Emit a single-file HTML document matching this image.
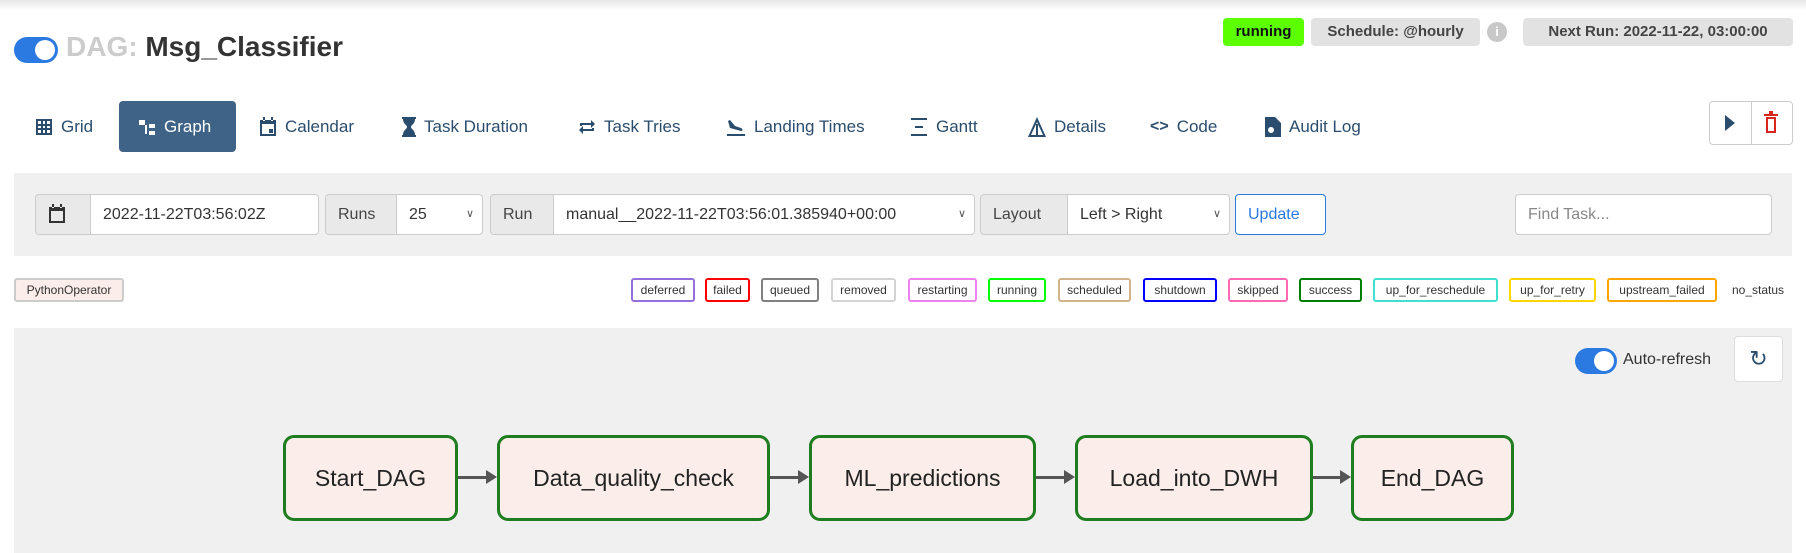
<!DOCTYPE html>
<html><head><meta charset="utf-8"><style>
*{box-sizing:border-box;margin:0;padding:0}
body{width:1806px;height:553px;overflow:hidden;background:#fff;font-family:"Liberation Sans",sans-serif;position:relative;color:#333}
.a{position:absolute}
.topshadow{left:0;top:0;width:1806px;height:10px;background:linear-gradient(#e6e6e6,#fff)}
.badge{position:absolute;top:18px;height:28px;border-radius:4px;font-weight:bold;font-size:15px;line-height:28px;text-align:center;color:#444;background:#e2e2e2}
.nav{position:absolute;top:101px;height:51px;line-height:51px;font-size:17px;color:#2a4d6e;display:flex;align-items:center;gap:8px}
.nav svg{fill:#2a4d6e}
.box{position:absolute;top:194px;height:41px;border:1px solid #ccc;font-size:16px;line-height:39px;padding-left:12px;background:#fff;color:#333}
.add{background:#e9e9e9;color:#444}
.chev{position:absolute;right:8px;top:0;font-size:11px;color:#555}
.st{position:absolute;top:278px;height:24px;border:2px solid;border-radius:3px;font-size:12px;line-height:20px;text-align:center;color:#333;background:#fff}
.node{position:absolute;top:435px;height:86px;border:3px solid #1e7d1e;border-radius:11px;background:#fbedea;font-size:23px;line-height:80px;text-align:center;color:#222}
.arr{position:absolute;top:476px;height:3px;background:#555}
.arrh{position:absolute;top:470px;width:0;height:0;border-top:7px solid transparent;border-bottom:7px solid transparent;border-left:11px solid #555}
.tog{position:absolute;width:44px;height:26px;border-radius:13px;background:#2a7ae2}
.tog::after{content:"";position:absolute;right:3px;top:3px;width:20px;height:20px;border-radius:50%;background:#fff}
</style></head><body>
<div class="a topshadow"></div>
<div class="tog" style="left:14px;top:37px"></div>
<div class="a" style="left:66px;top:31px;font-size:28px;font-weight:bold;color:#333"><span style="color:#ccc">DAG:</span> Msg_Classifier</div>

<div class="badge" style="left:1223px;width:81px;background:#5cff00;color:#111">running</div>
<div class="badge" style="left:1311px;width:169px">Schedule: @hourly</div>
<div class="a" style="left:1487px;top:22px;width:20px;height:20px;border-radius:50%;background:#c8c8c8;color:#fff;font-size:13px;font-weight:bold;text-align:center;line-height:20px">i</div>
<div class="badge" style="left:1523px;width:270px">Next Run: 2022-11-22, 03:00:00</div>

<div class="a" style="left:119px;top:101px;width:117px;height:51px;background:#3e6387;border-radius:4px"></div>
<div class="nav" style="left:35px"><svg width="18" height="18" viewBox="0 0 18 18"><path d="M1 1h16v16H1z M3 3v3h3V3z M8 3v3h2V3z M12 3v3h3V3z M3 8v2h3V8z M8 8v2h2V8z M12 8v2h3V8z M3 12v3h3v-3z M8 12v3h2v-3z M12 12v3h3v-3z" fill-rule="evenodd"/></svg>Grid</div>
<div class="nav" style="left:138px;color:#fff"><svg width="18" height="18" viewBox="0 0 18 18" style="fill:#fff"><rect x="1" y="2" width="6" height="5"/><rect x="11" y="6" width="6" height="4"/><rect x="11" y="13" width="6" height="4"/><rect x="7" y="7" width="2" height="9"/></svg>Graph</div>
<div class="nav" style="left:259px"><svg width="18" height="20" viewBox="0 0 18 20"><path d="M1 3h16v16H1z M3 7v10h12V7z M4 0h2v4H4z M12 0h2v4h-2z M10 12h4v4h-4z" fill-rule="evenodd"/></svg>Calendar</div>
<div class="nav" style="left:402px"><svg width="14" height="20" viewBox="0 0 14 20"><path d="M0 0h14v2h-1c0 5-4 6-4 8s4 3 4 8h1v2H0v-2h1c0-5 4-6 4-8S1 7 1 2H0z"/></svg>Task Duration</div>
<div class="nav" style="left:578px"><svg width="18" height="18" viewBox="0 0 18 18"><path d="M2 8V5h11V2l4 4-4 4V7H4v1z M16 10v3H5v3l-4-4 4-4v3h9v-1z"/></svg>Task Tries</div>
<div class="nav" style="left:726px"><svg width="20" height="18" viewBox="0 0 20 18"><path d="M1 16h18v2H1z M2 3l2-1 5 6 6 2c2 1 2 3 0 3L4 10z"/></svg>Landing Times</div>
<div class="nav" style="left:910px"><svg width="18" height="18" viewBox="0 0 18 18"><path d="M1 0h16v2H1z M5 8h8v2H5z M1 16h16v2H1z"/></svg>Gantt</div>
<div class="nav" style="left:1028px"><svg width="18" height="20" viewBox="0 0 18 20"><path d="M9 0L0 20h18z M9 5l-6 13h5V7h2v11h5z" fill-rule="evenodd"/></svg>Details</div>
<div class="nav" style="left:1150px"><span style="font-weight:bold;font-size:16px">&lt;&gt;</span>Code</div>
<div class="nav" style="left:1265px"><svg width="16" height="20" viewBox="0 0 16 20"><path d="M0 0h10l6 6v14H0z M6 10a3 3 0 1 0 0.1 0z M8 14l3 3" fill-rule="evenodd"/></svg>Audit Log</div>

<div class="a" style="left:1709px;top:101px;width:84px;height:44px;border:1px solid #ccc;border-radius:4px"></div>
<div class="a" style="left:1751px;top:101px;width:1px;height:44px;background:#ccc"></div>
<div class="a" style="left:1725px;top:115px;width:0;height:0;border-top:8px solid transparent;border-bottom:8px solid transparent;border-left:10px solid #2a4d6e"></div>
<svg class="a" style="left:1764px;top:111px" width="14" height="22" viewBox="0 0 14 22"><path d="M0 3h14v2H0z M5 0h4v3H5z M2 6h10v16H2z M4 8v12h6V8z" fill="#d9261c" fill-rule="evenodd"/></svg>

<div class="a" style="left:14px;top:173px;width:1778px;height:83px;background:#f0f0f0"></div>
<div class="box add" style="left:35px;width:56px;border-radius:4px 0 0 4px"><svg style="margin-top:9px" width="18" height="20" viewBox="0 0 18 20"><path d="M1 3h16v16H1z M3 7v10h12V7z M4 0h2v4H4z M12 0h2v4h-2z" fill="#333" fill-rule="evenodd"/></svg></div>
<div class="box" style="left:90px;width:229px;border-radius:0 4px 4px 0">2022-11-22T03:56:02Z</div>
<div class="box add" style="left:325px;width:72px;border-radius:4px 0 0 4px">Runs</div>
<div class="box" style="left:396px;width:87px;border-radius:0 4px 4px 0">25<span class="chev">&#8744;</span></div>
<div class="box add" style="left:490px;width:64px;border-radius:4px 0 0 4px">Run</div>
<div class="box" style="left:553px;width:422px;border-radius:0 4px 4px 0">manual__2022-11-22T03:56:01.385940+00:00<span class="chev">&#8744;</span></div>
<div class="box add" style="left:980px;width:88px;border-radius:4px 0 0 4px">Layout</div>
<div class="box" style="left:1067px;width:163px;border-radius:0 4px 4px 0">Left &gt; Right<span class="chev">&#8744;</span></div>
<div class="box" style="left:1235px;width:91px;border-color:#2a7ae2;color:#2a7ae2;border-radius:4px">Update</div>
<div class="box" style="left:1515px;width:257px;color:#888;border-radius:4px">Find Task...</div>

<div class="st" style="left:14px;width:110px;border-color:#ccc;background:#fbedea">PythonOperator</div>
<div class="st" style="left:631px;width:64px;border-color:#9370db">deferred</div>
<div class="st" style="left:705px;width:45px;border-color:red">failed</div>
<div class="st" style="left:761px;width:58px;border-color:gray">queued</div>
<div class="st" style="left:831px;width:65px;border-color:#d3d3d3">removed</div>
<div class="st" style="left:908px;width:69px;border-color:violet">restarting</div>
<div class="st" style="left:988px;width:58px;border-color:lime">running</div>
<div class="st" style="left:1058px;width:73px;border-color:tan">scheduled</div>
<div class="st" style="left:1143px;width:74px;border-color:blue">shutdown</div>
<div class="st" style="left:1228px;width:60px;border-color:hotpink">skipped</div>
<div class="st" style="left:1299px;width:63px;border-color:green">success</div>
<div class="st" style="left:1373px;width:125px;border-color:turquoise">up_for_reschedule</div>
<div class="st" style="left:1509px;width:87px;border-color:gold">up_for_retry</div>
<div class="st" style="left:1607px;width:110px;border-color:orange">upstream_failed</div>
<div class="st" style="left:1726px;width:64px;border-color:#fff">no_status</div>

<div class="a" style="left:14px;top:328px;width:1778px;height:225px;background:#f0f0f0"></div>
<div class="tog" style="left:1575px;top:348px;width:42px;height:26px"></div>
<div class="a" style="left:1623px;top:351px;font-size:16px;color:#333">Auto-refresh</div>
<div class="a" style="left:1734px;top:336px;width:49px;height:46px;background:#fff;border:1px solid #ddd;border-radius:4px;text-align:center;line-height:44px;font-size:22px;color:#2a4d6e">&#8635;</div>

<div class="node" style="left:283px;width:175px">Start_DAG</div>
<div class="node" style="left:497px;width:273px">Data_quality_check</div>
<div class="node" style="left:809px;width:227px">ML_predictions</div>
<div class="node" style="left:1075px;width:238px">Load_into_DWH</div>
<div class="node" style="left:1351px;width:163px">End_DAG</div>
<div class="arr" style="left:458px;width:30px"></div><div class="arrh" style="left:486px"></div>
<div class="arr" style="left:770px;width:30px"></div><div class="arrh" style="left:798px"></div>
<div class="arr" style="left:1036px;width:30px"></div><div class="arrh" style="left:1064px"></div>
<div class="arr" style="left:1313px;width:30px"></div><div class="arrh" style="left:1340px"></div>
</body></html>
